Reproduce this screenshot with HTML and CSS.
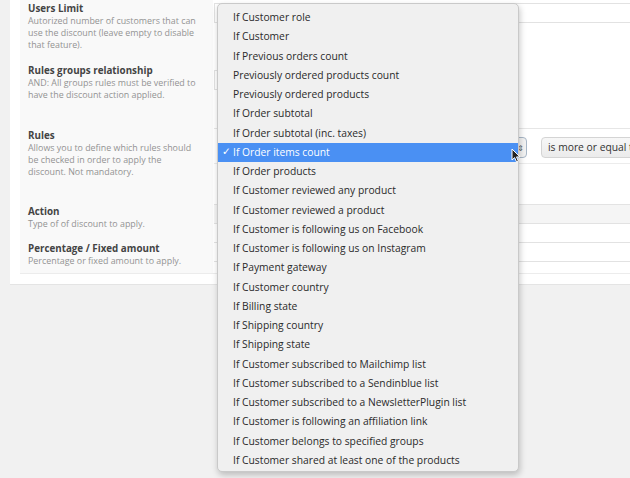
FILE: index.html
```html
<!DOCTYPE html>
<html>
<head>
<meta charset="utf-8">
<link rel="stylesheet" href="styles.css">
</head>
<body>
<div class="card">
  <div class="form">
    <div class="labels">
      <div class="field f1">
        <div class="title">Users Limit</div>
        <div class="desc">Autorized number of customers that can use the discount (leave empty to disable that feature).</div>
      </div>
      <div class="field f2">
        <div class="title">Rules groups relationship</div>
        <div class="desc">AND: All groups rules must be verified to have the discount action applied.</div>
      </div>
      <div class="field f3">
        <div class="title">Rules</div>
        <div class="desc">Allows you to define which rules should be checked in order to apply the discount. Not mandatory.</div>
      </div>
      <div class="field f4">
        <div class="title">Action</div>
        <div class="desc">Type of of discount to apply.</div>
      </div>
      <div class="field f5">
        <div class="title">Percentage / Fixed amount</div>
        <div class="desc">Percentage or fixed amount to apply.</div>
      </div>
    </div>
    <div class="controls">
      <div class="input in-limit"></div>
      <div class="input in-rel"></div>
      <div class="rules-box">
        <div class="rule-row">
          <div class="sel sel-type"><span class="arrows">&#8661;</span></div>
          <div class="sel sel-op">is more or equal to</div>
        </div>
      </div>
      <div class="band"></div>
      <div class="input in-row"></div>
      <div class="input in-row"></div>
    </div>
  </div>
</div>

<ul class="menu">
  <li>If Customer role</li>
  <li>If Customer</li>
  <li>If Previous orders count</li>
  <li>Previously ordered products count</li>
  <li>Previously ordered products</li>
  <li>If Order subtotal</li>
  <li>If Order subtotal (inc. taxes)</li>
  <li class="active"><span class="check">&#10003;</span>If Order items count</li>
  <li>If Order products</li>
  <li>If Customer reviewed any product</li>
  <li>If Customer reviewed a product</li>
  <li>If Customer is following us on Facebook</li>
  <li>If Customer is following us on Instagram</li>
  <li>If Payment gateway</li>
  <li>If Customer country</li>
  <li>If Billing state</li>
  <li>If Shipping country</li>
  <li>If Shipping state</li>
  <li>If Customer subscribed to Mailchimp list</li>
  <li>If Customer subscribed to a Sendinblue list</li>
  <li>If Customer subscribed to a NewsletterPlugin list</li>
  <li>If Customer is following an affiliation link</li>
  <li>If Customer belongs to specified groups</li>
  <li>If Customer shared at least one of the products</li>
</ul>

<svg class="cursor" width="11" height="15" viewBox="0 0 11 15">
  <path d="M1 1 L1 12 L3.6 9.6 L5.6 14 L7.4 13.2 L5.5 8.9 L9 8.9 Z" fill="#222" stroke="#fff" stroke-width="1" stroke-linejoin="round"/>
</svg>
</body>
</html>
```

FILE: styles.css
```css
html, body {
  margin: 0;
  padding: 0;
}
body {
  width: 630px;
  height: 478px;
  overflow: hidden;
  background: #f1f1f1;
  font-family: "Open Sans", "Liberation Sans", sans-serif;
  position: relative;
}
.card {
  margin-left: 10px;
  width: 640px;
  background: #fff;
  padding: 0 0 10px 10px;
  border-bottom: 1px solid #e4e4e4;
}
.form {
  display: grid;
  grid-template-columns: 193px 1fr;
  border-bottom: 1px solid #ececec;
}
.labels {
  background: #f9f9f9;
}
.field {
  box-sizing: border-box;
  padding: 6px 14px 0 8px;
}
.f1 { height: 58px; padding-top: 2px; }
.f2 { height: 65px; }
.f3 { height: 76px; }
.f4 { height: 37px; }
.f5 { height: 37px; }
.title {
  font-size: 9.8px;
  font-weight: 700;
  color: #444;
  line-height: 13px;
}
.desc {
  font-size: 8.9px;
  color: #939393;
  line-height: 12px;
}
.controls {
  padding-left: 1px;
  display: flex;
  flex-direction: column;
}
.input {
  box-sizing: border-box;
  border: 1px solid #e2e2e2;
  background: #fff;
}
.in-limit { margin-top: 3px; height: 20px; }
.in-rel { margin-top: 47px; height: 20px; width: 200px; }
.rules-box {
  margin-top: 38px;
  height: 77px;
  box-sizing: border-box;
  border-top: 1px solid #e6e6e6;
  border-bottom: 1px solid #e3e3e3;
}
.rule-row {
  height: 35px;
  box-sizing: border-box;
  border-bottom: 1px solid #ececec;
  display: flex;
  gap: 14px;
  padding: 8px 0 0 80px;
}
.sel {
  box-sizing: border-box;
  height: 21px;
  border-radius: 4px;
  font-size: 10.3px;
  color: #333;
  line-height: 19px;
  white-space: nowrap;
}
.sel-type {
  width: 233px;
  border: 1px solid #a9b8c8;
  background: #f3f3f3;
  text-align: right;
  padding-right: 2px;
}
.arrows {
  font-family: "DejaVu Sans", sans-serif;
  font-size: 8px;
  color: #555;
}
.sel-op {
  width: 150px;
  border: 1px solid #d4d4d4;
  background: linear-gradient(#f7f7f7, #ebebeb);
  padding-left: 6px;
}
.band {
  height: 19px;
  box-sizing: border-box;
  background: #f5f5f5;
  border-bottom: 1px solid #e2e2e2;
}
.in-row {
  height: 19px;
  border-width: 0 0 1px 0;
}
.menu {
  position: absolute;
  left: 217px;
  top: 3px;
  width: 302px;
  box-sizing: border-box;
  margin: 0;
  padding: 4px 0 1px;
  list-style: none;
  background: #f0f0f0;
  border: 1px solid #c9c9c9;
  border-radius: 5px;
  box-shadow: 1px 3px 6px rgba(0, 0, 0, 0.22);
}
.menu li {
  height: 19.26px;
  line-height: 19.26px;
  padding-left: 15px;
  font-size: 10.3px;
  color: #2a2a2a;
  white-space: nowrap;
  position: relative;
}
.menu li.active {
  background: #4a90f3;
  color: #fff;
}
.check {
  position: absolute;
  left: 4px;
  top: -1px;
  font-family: "DejaVu Sans", sans-serif;
  font-size: 10.5px;
  font-weight: bold;
}
.cursor {
  position: absolute;
  left: 511px;
  top: 148px;
}
```
